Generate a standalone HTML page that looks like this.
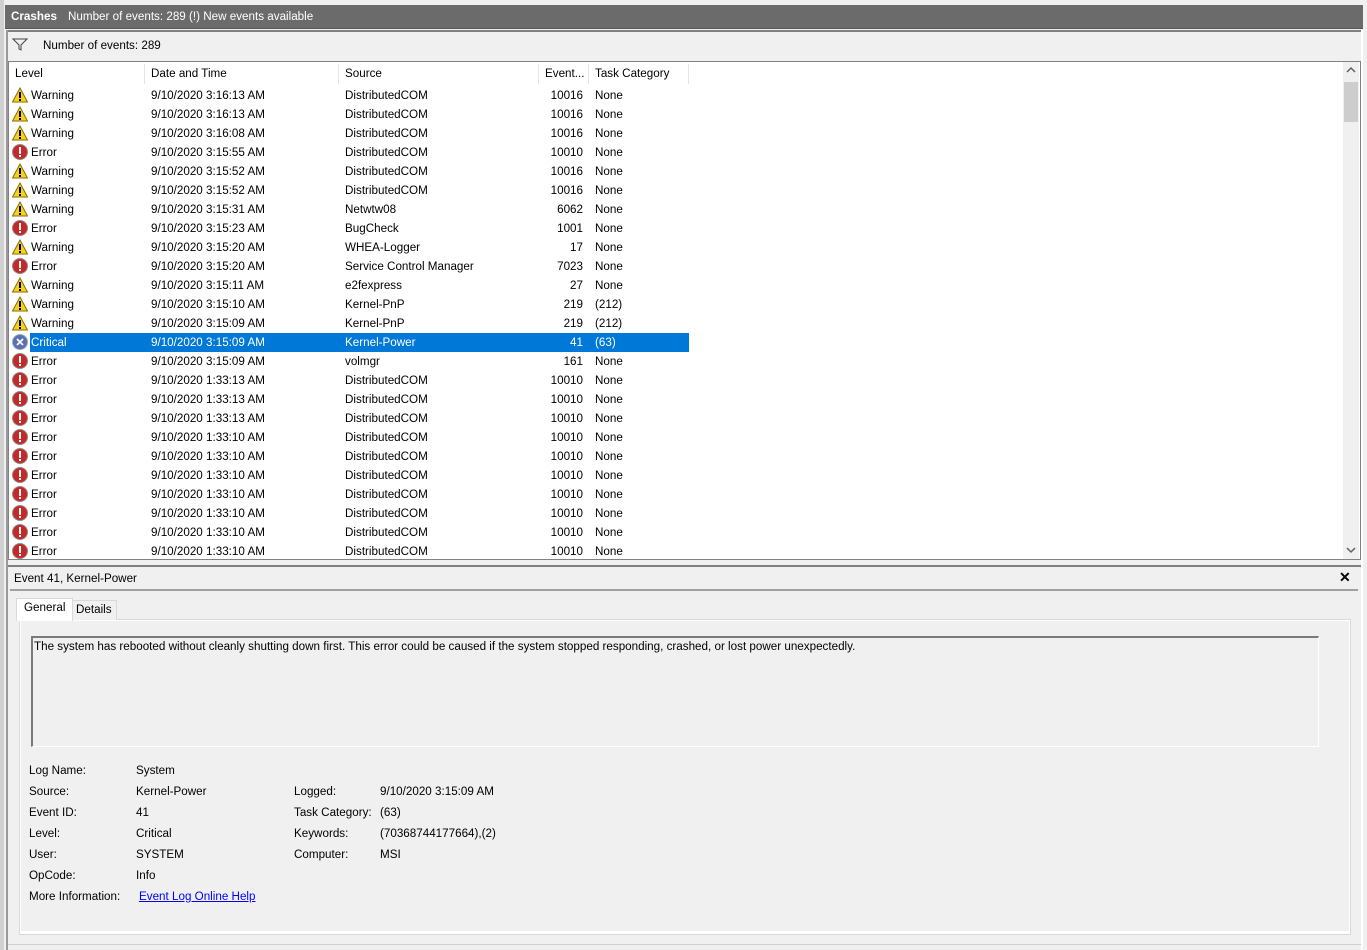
<!DOCTYPE html><html><head><style>
body{margin:0;width:1367px;height:950px;background:#f0f0f0;font-family:"Liberation Sans",sans-serif;font-size:11.65px;color:#000;position:relative;overflow:hidden}
.a{position:absolute;white-space:nowrap}
.row{position:absolute;left:10px;height:19px;width:680px}
.sel{background:#0078d7;color:#fff}
</style></head><body>
<div class="a" style="left:0;top:0;width:4px;height:950px;background:#d0d0d0"></div>
<div class="a" style="left:5px;top:5px;width:1358px;height:23px;background:#6b6b6b;color:#fff;border-bottom:1px solid #555"></div>
<div class="a" style="left:11px;top:10px;color:#fff;font-weight:bold">Crashes</div>
<div class="a" style="left:68px;top:10px;color:#fff">Number of events: 289 (!) New events available</div>
<div class="a" style="left:6px;top:30px;width:1357px;height:2px;background:#808080"></div>
<div class="a" style="left:6px;top:30px;width:2px;height:920px;background:#999"></div>
<div class="a" style="left:1361px;top:30px;width:2px;height:920px;background:#fff"></div>
<svg class="a" style="left:12px;top:38px" width="16" height="13"><path d="M1 1H15L9 7V12L7 11V7Z" fill="none" stroke="#444"/></svg>
<div class="a" style="left:43px;top:39px">Number of events: 289</div>
<div class="a" style="left:8px;top:61px;width:1351px;height:497px;background:#fff;border:1px solid #828282"></div>
<div class="a" style="left:1343px;top:62px;width:16px;height:497px;background:#f0f0f0"></div>
<div class="a" style="left:1344px;top:82px;width:14px;height:40px;background:#cdcdcd"></div>
<svg class="a" style="left:1346px;top:66px" width="10" height="8"><path d="M1 6L5 2L9 6" fill="none" stroke="#606060" stroke-width="1.5"/></svg>
<svg class="a" style="left:1346px;top:546px" width="10" height="8"><path d="M1 2L5 6L9 2" fill="none" stroke="#606060" stroke-width="1.5"/></svg>
<div class="a" style="left:144px;top:64px;width:1px;height:20px;background:#e5e5e5"></div>
<div class="a" style="left:338px;top:64px;width:1px;height:20px;background:#e5e5e5"></div>
<div class="a" style="left:538px;top:64px;width:1px;height:20px;background:#e5e5e5"></div>
<div class="a" style="left:588px;top:64px;width:1px;height:20px;background:#e5e5e5"></div>
<div class="a" style="left:688px;top:64px;width:1px;height:20px;background:#e5e5e5"></div>
<div class="a" style="left:15px;top:67px">Level</div>
<div class="a" style="left:151px;top:67px">Date and Time</div>
<div class="a" style="left:345px;top:67px">Source</div>
<div class="a" style="left:545px;top:67px">Event...</div>
<div class="a" style="left:595px;top:67px">Task Category</div>
<div id="rows"></div>
<script>
var d=[["W","3:16:13","DistributedCOM","10016","None"],["W","3:16:13","DistributedCOM","10016","None"],["W","3:16:08","DistributedCOM","10016","None"],["E","3:15:55","DistributedCOM","10010","None"],["W","3:15:52","DistributedCOM","10016","None"],["W","3:15:52","DistributedCOM","10016","None"],["W","3:15:31","Netwtw08","6062","None"],["E","3:15:23","BugCheck","1001","None"],["W","3:15:20","WHEA-Logger","17","None"],["E","3:15:20","Service Control Manager","7023","None"],["W","3:15:11","e2fexpress","27","None"],["W","3:15:10","Kernel-PnP","219","(212)"],["W","3:15:09","Kernel-PnP","219","(212)"],["C","3:15:09","Kernel-Power","41","(63)"],["E","3:15:09","volmgr","161","None"],["E","1:33:13","DistributedCOM","10010","None"],["E","1:33:13","DistributedCOM","10010","None"],["E","1:33:13","DistributedCOM","10010","None"],["E","1:33:10","DistributedCOM","10010","None"],["E","1:33:10","DistributedCOM","10010","None"],["E","1:33:10","DistributedCOM","10010","None"],["E","1:33:10","DistributedCOM","10010","None"],["E","1:33:10","DistributedCOM","10010","None"],["E","1:33:10","DistributedCOM","10010","None"],["E","1:33:10","DistributedCOM","10010","None"]];
var h="";var L={W:"Warning",E:"Error",C:"Critical"};
var ic={W:'<svg width="16" height="16"><path d="M8 1L15.5 15H0.5Z" fill="#f7d21c" stroke="#8a6d00"/><rect x="7" y="5" width="2" height="6" fill="#000"/><rect x="7" y="12" width="2" height="2" fill="#000"/></svg>',E:'<svg width="16" height="16"><circle cx="8" cy="8" r="7.5" fill="#c62828" stroke="#8b8b8b"/><rect x="7" y="3" width="2" height="7" fill="#fff"/><rect x="7" y="11" width="2" height="2" fill="#fff"/></svg>',C:'<svg width="16" height="16"><circle cx="8" cy="8" r="7.5" fill="#5b6fb5" stroke="#9aa"/><path d="M5 5L11 11M11 5L5 11" stroke="#fff" stroke-width="1.8"/></svg>'};
d.forEach(function(r,i){var y=86+19*i;var s=r[0]=="C";
h+='<div class="a" style="left:12px;top:'+(y+1)+'px;width:16px;height:16px">'+ic[r[0]]+'</div>';
h+='<div class="row'+(s?' sel':'')+'" style="top:'+y+'px;left:30px;width:659px"></div>';
var c=s?'color:#fff;':'';
h+='<div class="a" style="'+c+'left:31px;top:'+(y+3)+'px">'+L[r[0]]+'</div>';
h+='<div class="a" style="'+c+'left:151px;top:'+(y+3)+'px">9/10/2020 '+r[1]+' AM</div>';
h+='<div class="a" style="'+c+'left:345px;top:'+(y+3)+'px">'+r[2]+'</div>';
h+='<div class="a" style="'+c+'right:784px;top:'+(y+3)+'px">'+r[3]+'</div>';
h+='<div class="a" style="'+c+'left:595px;top:'+(y+3)+'px">'+r[4]+'</div>';});
document.getElementById("rows").innerHTML=h;
</script>
<div class="a" style="left:8px;top:565px;width:1353px;height:2px;background:#808080"></div>
<div class="a" style="left:14px;top:572px">Event 41, Kernel-Power</div>
<div class="a" style="left:1339px;top:569px;font-weight:bold;font-size:14px">✕</div>
<div class="a" style="left:10px;top:589px;width:1348px;height:2px;background:#a0a0a0"></div>
<div class="a" style="left:19px;top:619px;width:1330px;height:314px;background:#fff;border:1px solid #d9d9d9"></div>
<div class="a" style="left:21px;top:621px;width:1328px;height:310px;background:#f0f0f0"></div>
<div class="a" style="left:16px;top:598px;width:55px;height:22px;background:#fff;border:1px solid #d9d9d9;border-bottom:none"></div>
<div class="a" style="left:24px;top:601px">General</div>
<div class="a" style="left:72px;top:600px;width:43px;height:19px;background:#f0f0f0;border:1px solid #d9d9d9;border-bottom:none"></div>
<div class="a" style="left:76px;top:603px">Details</div>
<div class="a" style="left:31px;top:636px;width:1285px;height:108px;border:1px solid #fff;border-top:2px solid #7a7a7a;border-left:2px solid #7a7a7a"></div>
<div class="a" style="left:34px;top:640px">The system has rebooted without cleanly shutting down first. This error could be caused if the system stopped responding, crashed, or lost power unexpectedly.</div>
<div class="a" style="left:29px;top:764px">Log Name:</div><div class="a" style="left:136px;top:764px">System</div>
<div class="a" style="left:29px;top:785px">Source:</div><div class="a" style="left:136px;top:785px">Kernel-Power</div>
<div class="a" style="left:29px;top:806px">Event ID:</div><div class="a" style="left:136px;top:806px">41</div>
<div class="a" style="left:29px;top:827px">Level:</div><div class="a" style="left:136px;top:827px">Critical</div>
<div class="a" style="left:29px;top:848px">User:</div><div class="a" style="left:136px;top:848px">SYSTEM</div>
<div class="a" style="left:29px;top:869px">OpCode:</div><div class="a" style="left:136px;top:869px">Info</div>
<div class="a" style="left:29px;top:890px">More Information:</div><div class="a" style="left:139px;top:890px;color:#0000ff;text-decoration:underline">Event Log Online Help</div>
<div class="a" style="left:294px;top:785px">Logged:</div><div class="a" style="left:380px;top:785px">9/10/2020 3:15:09 AM</div>
<div class="a" style="left:294px;top:806px">Task Category:</div><div class="a" style="left:380px;top:806px">(63)</div>
<div class="a" style="left:294px;top:827px">Keywords:</div><div class="a" style="left:380px;top:827px">(70368744177664),(2)</div>
<div class="a" style="left:294px;top:848px">Computer:</div><div class="a" style="left:380px;top:848px">MSI</div>
<div class="a" style="left:8px;top:944px;width:1353px;height:1px;background:#d0d0d0"></div>
</body></html>
